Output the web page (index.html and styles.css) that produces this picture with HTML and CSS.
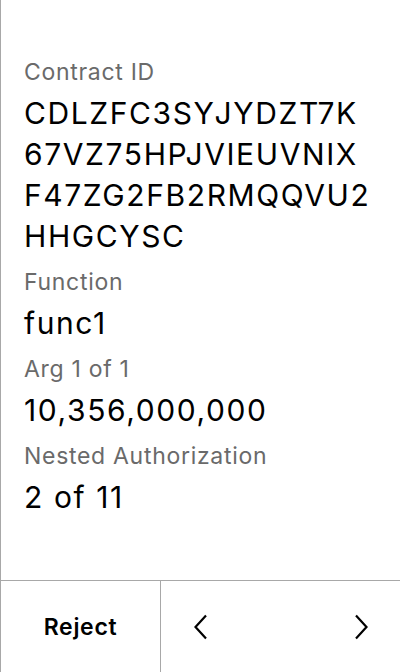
FILE: index.html
```html
<!DOCTYPE html>
<html>
<head>
<meta charset="utf-8">
<link rel="stylesheet" href="styles.css">
</head>
<body>
<div class="screen">
  <div class="content">
    <div class="label">Contract ID</div>
    <div class="value">CDLZFC3SYJYDZT7K<br>67VZ75HPJVIEUVNIX<br>F47ZG2FB2RMQQVU2<br>HHGCYSC</div>
    <div class="label">Function</div>
    <div class="value">func1</div>
    <div class="label">Arg 1 of 1</div>
    <div class="value">10,356,000,000</div>
    <div class="label">Nested Authorization</div>
    <div class="value">2 of 11</div>
  </div>
  <div class="footer">
    <div class="reject">Reject</div>
    <div class="nav">
      <svg class="chev" width="16" height="26" viewBox="0 0 16 26"><path d="M13 1.5 L2.5 13 L13 24.5" fill="none" stroke="#000" stroke-width="2.2"/></svg>
      <svg class="chev" width="16" height="26" viewBox="0 0 16 26"><path d="M3 1.5 L13.5 13 L3 24.5" fill="none" stroke="#000" stroke-width="2.2"/></svg>
    </div>
  </div>
</div>
</body>
</html>
```
FILE: styles.css
```css
html, body {
  margin: 0;
  padding: 0;
  background: #fff;
}
.screen {
  width: 400px;
  height: 672px;
  box-sizing: border-box;
  border-left: 1px solid #a8a8a8;
  display: flex;
  flex-direction: column;
  font-family: Inter, "Noto Sans", sans-serif;
  color: #000;
}
.content {
  flex: 1;
  padding: 56px 0 0 23px;
}
.label {
  font-size: 23px;
  line-height: 32px;
  color: #6a6a6a;
  letter-spacing: 0.7px;
  margin-top: 9px;
}
.label:first-child {
  margin-top: 0;
}
.value {
  font-size: 30px;
  line-height: 41px;
  letter-spacing: 1.6px;
  margin-top: 5px;
  white-space: nowrap;
}
.footer {
  height: 92px;
  border-top: 1px solid #a8a8a8;
  display: flex;
  box-sizing: border-box;
}
.reject {
  width: 159px;
  border-right: 1px solid #a8a8a8;
  display: flex;
  align-items: center;
  justify-content: center;
  font-size: 23px;
  font-weight: 600;
  letter-spacing: 0.7px;
}
.nav {
  flex: 1;
  display: flex;
  align-items: center;
  justify-content: space-between;
  padding: 0 31px 0 32px;
}
```
